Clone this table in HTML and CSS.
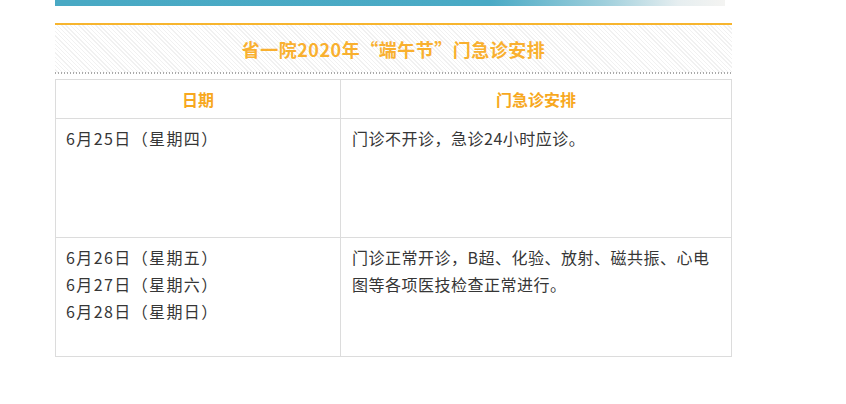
FILE: index.html
```html
<!DOCTYPE html>
<html lang="zh-CN">
<head>
<meta charset="utf-8">
<title>省一院2020年端午节门急诊安排</title>
<link rel="stylesheet" href="styles.css">
</head>
<body>
<div class="page">
  <div class="topbar"></div>
  <div class="notice">
    <h1 class="notice-title">省一院2020年“端午节”门急诊安排</h1>
  </div>
  <table class="schedule">
    <thead>
      <tr>
        <th class="col-date">日期</th>
        <th class="col-plan">门急诊安排</th>
      </tr>
    </thead>
    <tbody>
      <tr>
        <td class="date">6月25日（星期四）</td>
        <td class="plan">门诊不开诊，急诊24小时应诊。</td>
      </tr>
      <tr>
        <td class="date">6月26日（星期五）<br>6月27日（星期六）<br>6月28日（星期日）</td>
        <td class="plan">门诊正常开诊，B超、化验、放射、磁共振、心电图等各项医技检查正常进行。</td>
      </tr>
    </tbody>
  </table>
</div>
</body>
</html>
```

FILE: styles.css
```css
html, body {
  margin: 0;
  padding: 0;
  background: #fff;
}
body {
  font-family: "Noto Sans CJK SC", "Noto Sans", sans-serif;
  color: #363636;
}
.page {
  margin-left: 55px;
  width: 677px;
}
.topbar {
  width: 670px;
  height: 6px;
  background: linear-gradient(90deg, #49a9c4 0%, #4aaac5 65%, #9fcfdc 82%, #e6eef0 93%, #f4f4f2 100%);
}
.notice {
  margin-top: 17px;
  border-top: 2px solid #f7b52e;
  height: 48px;
  display: flex;
  align-items: center;
  justify-content: center;
  background-color: #fff;
  background-image: repeating-linear-gradient(45deg, #ffffff 0 2px, #f1f1f1 2px 3px);
  position: relative;
}
.notice::after {
  content: "";
  position: absolute;
  left: 0;
  right: 0;
  bottom: -1px;
  height: 2px;
  background-image: repeating-linear-gradient(90deg, #a9a9a9 0 1px, transparent 1px 3px);
}
.notice-title {
  margin: 0;
  font-size: 18px;
  font-weight: bold;
  letter-spacing: 0.5px;
  color: #f9b02f;
  line-height: 24px;
  padding-bottom: 1px;
}
.schedule {
  margin-top: 6px;
  width: 677px;
  border-collapse: collapse;
  table-layout: fixed;
  font-size: 16px;
}
.schedule th,
.schedule td {
  border: 1px solid #dcdcdc;
}
.schedule th {
  height: 38px;
  padding: 0;
  font-weight: bold;
  color: #f7a81e;
  text-align: center;
  vertical-align: middle;
}
.col-date {
  width: 284px;
}
.schedule td {
  height: 119px;
  box-sizing: border-box;
  padding: 6px 10px 0 10px;
  line-height: 27px;
  vertical-align: top;
  text-align: left;
}
.schedule td.date {
  letter-spacing: 1.4px;
}
.schedule td.plan {
  padding-left: 11px;
  letter-spacing: 0.5px;
}
```
